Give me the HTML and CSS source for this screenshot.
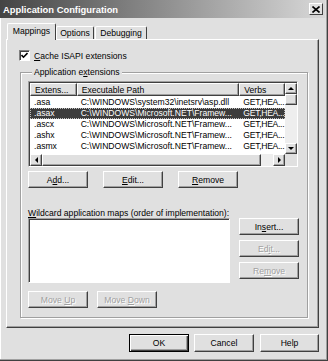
FILE: index.html
```html
<!DOCTYPE html>
<html lang="en">
  <head>
    <meta charset="UTF-8" />
    <title>Application Configuration</title>
    <link rel="stylesheet" href="styles.css">
  </head>
  <body>
    <div class="dialog">
      <div class="titlebar">
        <span>Application Configuration</span>
        <div class="close">
          <svg width="8" height="7" viewBox="0 0 8 7">
            <path d="M0.5 0.5 L7.5 6.5 M7.5 0.5 L0.5 6.5" stroke="#000" stroke-width="1.6" />
          </svg>
        </div>
      </div>
      <div class="content">
        <div class="tabs">
          <div class="tab active">Mappings</div>
          <div class="tab options">Options</div>
          <div class="tab debugging">Debugging</div>
        </div>
        <div class="panel">
          <div class="check">
            <span class="box">
              <svg width="7" height="7" viewBox="0 0 7 7">
                <path d="M0.5 3 L2.5 5.2 L6.5 1" stroke="#000" stroke-width="1.6" fill="none" />
              </svg>
            </span>
            <span><u>C</u>ache ISAPI extensions</span>
          </div>
          <div class="group">
            <div class="legend">Application e<u>x</u>tensions</div>
            <div class="listview">
              <div class="lv-main">
                <div class="lv-row lv-head">
                  <div class="c1">Extens...</div>
                  <div class="c2">Executable Path</div>
                  <div class="c3">Verbs</div>
                </div>
                <div class="lv-row">
                  <div class="c1">.asa</div>
                  <div class="c2">C:\WINDOWS\system32\inetsrv\asp.dll</div>
                  <div class="c3">GET,HEA...</div>
                </div>
                <div class="lv-row selected">
                  <div class="c1">.asax</div>
                  <div class="c2">C:\WINDOWS\Microsoft.NET\Framew...</div>
                  <div class="c3">GET,HEA...</div>
                </div>
                <div class="lv-row">
                  <div class="c1">.ascx</div>
                  <div class="c2">C:\WINDOWS\Microsoft.NET\Framew...</div>
                  <div class="c3">GET,HEA...</div>
                </div>
                <div class="lv-row">
                  <div class="c1">.ashx</div>
                  <div class="c2">C:\WINDOWS\Microsoft.NET\Framew...</div>
                  <div class="c3">GET,HEA...</div>
                </div>
                <div class="lv-row">
                  <div class="c1">.asmx</div>
                  <div class="c2">C:\WINDOWS\Microsoft.NET\Framew...</div>
                  <div class="c3">GET,HEA...</div>
                </div>
              </div>
              <div class="vscroll">
                <div class="sb-btn arrow-up"></div>
                <div class="sb-btn"></div>
                <div class="track"></div>
                <div class="sb-btn arrow-down"></div>
              </div>
              <div class="hscroll">
                <div class="sb-btn arrow-left"></div>
                <div class="sb-btn hthumb"></div>
                <div class="track"></div>
                <div class="sb-btn arrow-right"></div>
              </div>
              <div class="corner"></div>
            </div>
            <div class="btn-row">
              <button class="btn">A<u>d</u>d...</button>
              <button class="btn"><u>E</u>dit...</button>
              <button class="btn"><u>R</u>emove</button>
            </div>
            <div class="wlabel"><u>W</u>ildcard application maps (order of implementation):</div>
            <div class="wrow">
              <div class="wlist"></div>
              <div class="wbtns">
                <button class="btn">In<u>s</u>ert...</button>
                <button class="btn disabled">Ed<u>i</u>t...</button>
                <button class="btn disabled">Re<u>m</u>ove</button>
              </div>
            </div>
            <div class="btn-row move-row">
              <button class="btn disabled">Move <u>U</u>p</button>
              <button class="btn disabled">Move <u>D</u>own</button>
            </div>
          </div>
        </div>
        <div class="footer">
          <button class="btn big default">OK</button>
          <button class="btn big">Cancel</button>
          <button class="btn big help">Help</button>
        </div>
      </div>
    </div>
  </body>
</html>
```

FILE: styles.css
```css
* {
  box-sizing: border-box;
}
body {
  margin: 0;
  font-family: "Liberation Sans", Arial, sans-serif;
  font-size: 8.6px;
  color: #000;
  background: #fff;
}
.dialog {
  width: 328px;
  height: 361px;
  background: #e0e0e0;
  border-right: 1px solid #404040;
  border-bottom: 1px solid #404040;
  box-shadow: inset -1px -1px #a0a0a0, inset 1px 0 #fff;
  display: flex;
  flex-direction: column;
}
.titlebar {
  height: 18px;
  margin-right: 2px;
  padding: 0 2px 0 3px;
  background: linear-gradient(to right, #444, #d8d8d8);
  color: #fff;
  font-weight: bold;
  font-size: 9.4px;
  display: flex;
  align-items: center;
  justify-content: space-between;
}
.close {
  width: 14px;
  height: 12px;
  background: #e0e0e0;
  border: 1px solid;
  border-color: #fff #404040 #404040 #fff;
  display: flex;
  align-items: center;
  justify-content: center;
}
.content {
  margin-left: 6px;
  width: 313px;
}
.tabs {
  display: flex;
  align-items: flex-end;
  height: 16px;
  margin-top: 5px;
  padding-left: 1px;
}
.tab {
  height: 13px;
  line-height: 12px;
  text-align: center;
  border: 1px solid;
  border-color: #fff #404040 transparent #fff;
  border-bottom: 0;
  border-radius: 2px 2px 0 0;
}
.tab.active {
  width: 49px;
  height: 17px;
  line-height: 14px;
  margin-bottom: -1px;
  position: relative;
  z-index: 1;
  background: #e0e0e0;
}
.tab.options {
  width: 38px;
}
.tab.debugging {
  width: 52px;
  margin-left: 1px;
}
.panel {
  height: 289px;
  border: 1px solid;
  border-color: #fff #404040 #404040 #fff;
  box-shadow: inset -1px -1px #a0a0a0;
  padding: 10px 10px 10px 13px;
}
.check {
  display: flex;
  align-items: center;
  gap: 4px;
  height: 11px;
  margin-left: -1px;
}
.box {
  width: 11px;
  height: 11px;
  background: #fff;
  border: 1px solid;
  border-color: #808080 #fff #fff #808080;
  box-shadow: inset 1px 1px #404040;
  display: flex;
  align-items: center;
  justify-content: center;
}
.group {
  margin-top: 11px;
  border: 1px solid #a0a0a0;
  box-shadow: inset 1px 1px #fff, 1px 1px #fff;
  padding: 0 8px 9px 7px;
}
.legend {
  display: table;
  margin: -6px 0 0 4px;
  padding: 0 2px;
  height: 10px;
  line-height: 10px;
  background: #e0e0e0;
}
.listview {
  margin-top: 4px;
  width: 270px;
  height: 86px;
  background: #fff;
  border: 1px solid;
  border-color: #a0a0a0 #fff #fff #a0a0a0;
  box-shadow: inset 1px 1px #404040;
  padding: 1px 0 0 1px;
  display: grid;
  grid-template-columns: 1fr 12px;
  grid-template-rows: 1fr 12px;
}
.lv-main {
  overflow: hidden;
}
.lv-row {
  display: flex;
  height: 11px;
  line-height: 11px;
  white-space: nowrap;
}
.lv-row div {
  overflow: hidden;
  padding-left: 4px;
}
.c1 {
  width: 47px;
}
.c2 {
  width: 164px;
}
.c3 {
  width: 46px;
  letter-spacing: -0.3px;
}
.lv-head {
  height: 13px;
  line-height: 12px;
  margin-bottom: 1px;
}
.lv-head div {
  background: #e0e0e0;
  border: 1px solid;
  border-color: #fff #404040 #404040 #fff;
  box-shadow: inset -1px -1px #a0a0a0;
  letter-spacing: 0;
}
.lv-row.selected {
  background: #3c3c3c;
  color: #fff;
  outline: 1px dotted #c0c0c0;
  outline-offset: -1px;
}
.vscroll,
.hscroll {
  display: flex;
  background: #eee;
}
.vscroll {
  flex-direction: column;
}
.sb-btn {
  flex: 0 0 11px;
  background: #e0e0e0;
  border: 1px solid;
  border-color: #fff #404040 #404040 #fff;
  box-shadow: inset -1px -1px #a0a0a0;
  display: flex;
  align-items: center;
  justify-content: center;
}
.hscroll .sb-btn {
  flex-basis: 12px;
}
.hscroll .hthumb {
  flex-basis: 219px;
}
.track {
  flex: 1;
}
.corner {
  background: #e0e0e0;
}
.arrow-up::after,
.arrow-down::after,
.arrow-left::after,
.arrow-right::after {
  content: "";
  border: 3px solid transparent;
}
.arrow-up::after {
  border-bottom-color: #000;
  margin-top: -3px;
}
.arrow-down::after {
  border-top-color: #000;
  margin-bottom: -3px;
}
.arrow-left::after {
  border-right-color: #000;
  margin-left: -3px;
}
.arrow-right::after {
  border-left-color: #000;
  margin-right: -3px;
}
.btn {
  width: 60px;
  height: 17px;
  padding: 0;
  font: inherit;
  color: #000;
  background: #e0e0e0;
  border: 1px solid;
  border-color: #fff #404040 #404040 #fff;
  box-shadow: inset -1px -1px #a0a0a0;
  border-radius: 0;
}
.btn.disabled {
  color: #a0a0a0;
  text-shadow: 1px 1px #fff;
}
.btn-row {
  display: flex;
  gap: 15px;
  margin-top: 4px;
}
.wlabel {
  margin-top: 20px;
  height: 10px;
  line-height: 10px;
}
.wrow {
  display: flex;
  gap: 9px;
}
.wlist {
  width: 203px;
  height: 65px;
  background: #fff;
  border: 1px solid;
  border-color: #a0a0a0 #fff #fff #a0a0a0;
  box-shadow: inset 1px 1px #404040;
}
.wbtns {
  display: flex;
  flex-direction: column;
  gap: 5px;
}
.move-row {
  gap: 9px;
  margin-top: 8px;
}
.footer {
  display: flex;
  justify-content: flex-end;
  gap: 5px;
  margin-top: 6px;
}
.btn.big {
  height: 18px;
}
.btn.default {
  border: 1px solid #000;
  box-shadow: inset 1px 1px #fff, inset -1px -1px #404040, inset -2px -2px #a0a0a0;
}
.btn.help {
  width: 59px;
  margin-left: 1px;
}
```
